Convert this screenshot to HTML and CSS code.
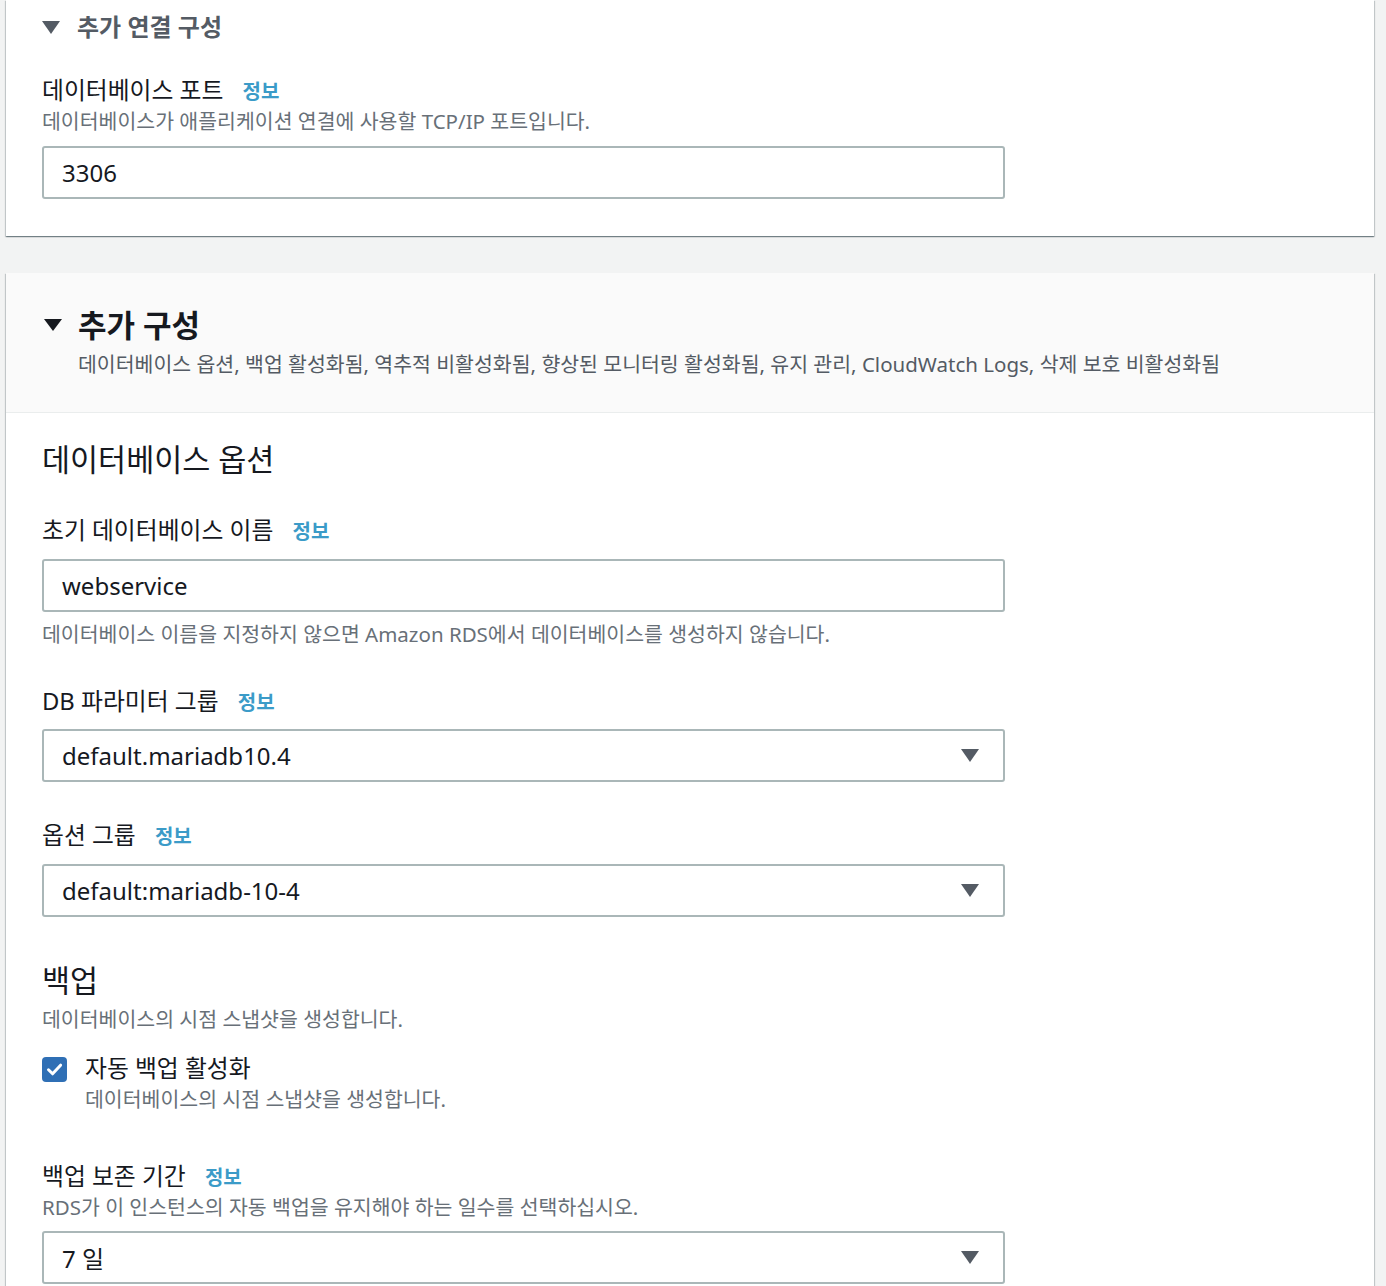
FILE: index.html
```html
<!DOCTYPE html>
<html lang="ko">
<head>
    <meta charset="UTF-8">
    <meta name="viewport" content="width=device-width, initial-scale=1.0">
    <title>RDS 추가 구성</title>
    <link rel="stylesheet" href="styles.css">
</head>
<body>
    <div class="page">
        <div class="card card-top">
            <div class="card-body first">
                <h3 class="expander muted">
                    <svg class="caret" width="18" height="13" viewBox="0 0 18 13"><polygon points="0,0 18,0 9,13" /></svg>
                    추가 연결 구성
                </h3>
                <div class="field gap-32">
                    <div class="label">데이터베이스 포트 <a class="info">정보</a></div>
                    <div class="desc">데이터베이스가 애플리케이션 연결에 사용할 TCP/IP 포트입니다.</div>
                    <div class="input">3306</div>
                </div>
            </div>
        </div>

        <div class="card card-second">
            <div class="card-header">
                <h2 class="expander">
                    <svg class="caret" width="18" height="12" viewBox="0 0 18 12"><polygon points="0,0 18,0 9,12" /></svg>
                    추가 구성
                </h2>
                <div class="summary">데이터베이스 옵션, 백업 활성화됨, 역추적 비활성화됨, 향상된 모니터링 활성화됨, 유지 관리, CloudWatch Logs, 삭제 보호 비활성화됨</div>
            </div>
            <div class="card-body">
                <h4 class="sub-title">데이터베이스 옵션</h4>

                <div class="label m36">초기 데이터베이스 이름 <a class="info">정보</a></div>
                <div class="input m14">webservice</div>
                <div class="desc m9">데이터베이스 이름을 지정하지 않으면 Amazon RDS에서 데이터베이스를 생성하지 않습니다.</div>

                <div class="label m39">DB 파라미터 그룹 <a class="info">정보</a></div>
                <div class="input select m13">default.mariadb10.4
                    <svg class="arrow" width="18" height="13" viewBox="0 0 18 13"><polygon points="0,0 18,0 9,13" /></svg>
                </div>

                <div class="label m38">옵션 그룹 <a class="info">정보</a></div>
                <div class="input select m14">default:mariadb-10-4
                    <svg class="arrow" width="18" height="13" viewBox="0 0 18 13"><polygon points="0,0 18,0 9,13" /></svg>
                </div>

                <h4 class="sub-title m43">백업</h4>
                <div class="desc m6">데이터베이스의 시점 스냅샷을 생성합니다.</div>

                <div class="check-row">
                    <span class="checkbox">
                        <svg width="25" height="25" viewBox="0 0 25 25"><path d="M6.5 12.8 L10.6 16.8 L18.6 8.2" fill="none" stroke="#fff" stroke-width="3" stroke-linecap="round" stroke-linejoin="round"/></svg>
                    </span>
                    <div>
                        <div class="label">자동 백업 활성화</div>
                        <div class="desc m3">데이터베이스의 시점 스냅샷을 생성합니다.</div>
                    </div>
                </div>

                <div class="label m49">백업 보존 기간 <a class="info">정보</a></div>
                <div class="desc m3">RDS가 이 인스턴스의 자동 백업을 유지해야 하는 일수를 선택하십시오.</div>
                <div class="input select m11">7 일
                    <svg class="arrow" width="18" height="13" viewBox="0 0 18 13"><polygon points="0,0 18,0 9,13" /></svg>
                </div>
            </div>
        </div>
    </div>
</body>
</html>
```

FILE: styles.css
```css
body {
    margin: 0;
    background-color: #f2f3f3;
    font-family: "Noto Sans", "Noto Sans CJK KR", sans-serif;
    color: #16191f;
    overflow: hidden;
}
.page {
    padding: 0 12px 0 6px;
}
.card {
    background-color: #fff;
    box-shadow: 0 1px 1px 0 rgba(0, 28, 36, 0.35), 1px 1px 1px 0 rgba(0, 28, 36, 0.15), -1px 1px 1px 0 rgba(0, 28, 36, 0.15);
}
.card-second {
    margin-top: 37px;
}
.card-body {
    padding: 26px 36px 40px 36px;
}
.card-body.first {
    padding: 11px 36px 37px 36px;
}
.card-header {
    background-color: #fafafa;
    border-bottom: 1px solid #eaeded;
    padding: 34px 36px 35px 36px;
}
.expander {
    display: flex;
    align-items: center;
    margin: 0;
    font-weight: 700;
}
h3.expander {
    font-size: 24px;
    line-height: 32px;
    height: 32px;
}
h3.expander .caret {
    margin-right: 17px;
}
h2.expander {
    font-size: 31px;
    line-height: 36px;
    height: 36px;
    padding-left: 2px;
}
h2.expander .caret {
    margin-right: 16px;
    fill: #16191f;
}
.caret {
    fill: #545b64;
}
.muted {
    color: #545b64;
}
.summary {
    margin-top: 8px;
    padding-left: 36px;
    font-size: 20.5px;
    line-height: 26px;
    height: 26px;
    color: #545b64;
    white-space: nowrap;
}
.sub-title {
    margin: 0;
    font-size: 30.5px;
    line-height: 40px;
    height: 40px;
    font-weight: 400;
}
.label {
    font-size: 23.8px;
    line-height: 30px;
    height: 30px;
}
.info {
    margin-left: 13px;
    font-size: 20px;
    line-height: 20px;
    font-weight: 700;
    color: #3b9bc8;
}
.desc {
    font-size: 20.5px;
    line-height: 26px;
    height: 26px;
    color: #687078;
    white-space: nowrap;
}
.gap-32 .label {
    margin-top: 32px;
}
.gap-32 .desc {
    margin-top: 3px;
}
.gap-32 .input {
    margin-top: 12px;
}
.input {
    box-sizing: border-box;
    width: 963px;
    height: 53px;
    border: 2px solid #aab7b8;
    border-radius: 3px;
    padding: 0 18px;
    display: flex;
    align-items: center;
    font-size: 24px;
    color: #16191f;
}
.select {
    justify-content: space-between;
}
.arrow {
    fill: #545b64;
    margin-right: 6px;
}
.check-row {
    display: flex;
    align-items: flex-start;
    margin-top: 21px;
}
.checkbox {
    width: 25px;
    height: 25px;
    margin-top: 4px;
    margin-right: 18px;
    border-radius: 4px;
    background-color: #2f6fb5;
    display: flex;
}
.m3 { margin-top: 3px; }
.m6 { margin-top: 6px; }
.m9 { margin-top: 9px; }
.m11 { margin-top: 11px; }
.m13 { margin-top: 13px; }
.m14 { margin-top: 14px; }
.m36 { margin-top: 36px; }
.m38 { margin-top: 38px; }
.m39 { margin-top: 39px; }
.m43 { margin-top: 43px; }
.m49 { margin-top: 49px; }
```
